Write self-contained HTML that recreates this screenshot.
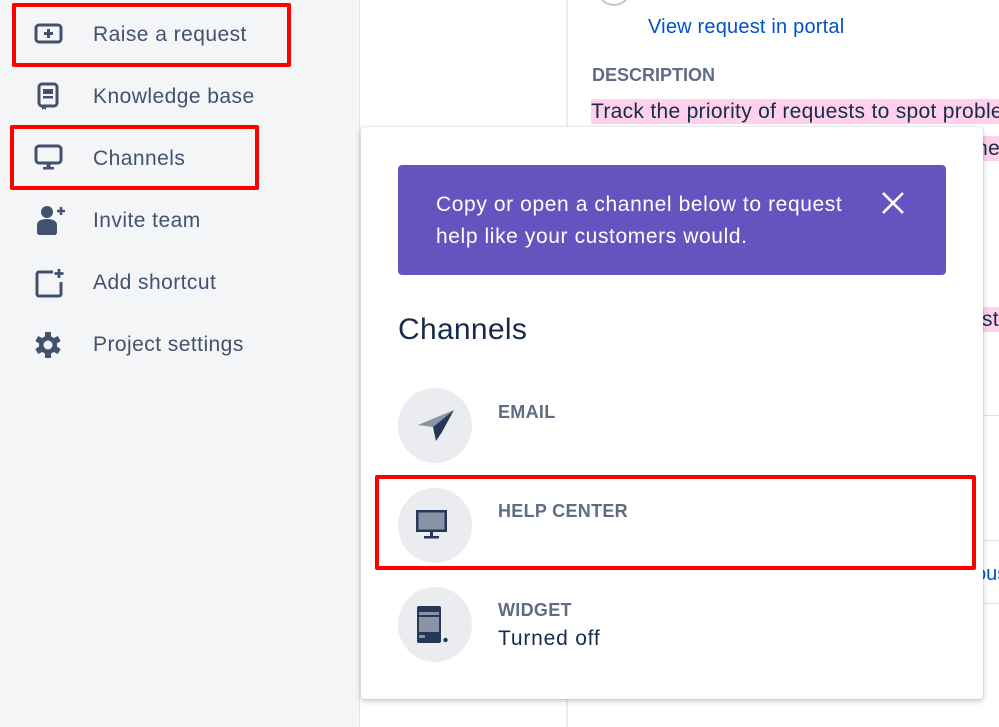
<!DOCTYPE html>
<html><head><meta charset="utf-8"><style>
*{margin:0;padding:0;box-sizing:border-box}
body{width:999px;height:727px;overflow:hidden;background:#fff;font-family:"Liberation Sans",sans-serif;position:relative}
.abs{position:absolute}
.side{left:0;top:0;width:360px;height:727px;background:#f4f5f7;border-right:1px solid #e4e6ea}
.nav{position:absolute;left:93px;font-size:21px;letter-spacing:.45px;color:#42526e;line-height:24px}
.ic{position:absolute;left:34px}
.red{position:absolute;border:4px solid #ff0000;border-radius:2px}
.pink{background:#ffd1ea;color:#172b4d;font-size:21px;letter-spacing:.3px;line-height:25px}
.hl{position:absolute;height:1px;background:#dfe1e6}
.pop{left:361px;top:127px;width:622px;height:572px;background:#fff;border-radius:4px;box-shadow:0 2px 6px rgba(9,30,66,.25),0 0 1px rgba(9,30,66,.3)}
.circ{position:absolute;left:398px;width:74px;height:75px;border-radius:50%;background:#ebecf0}
.lab{position:absolute;left:498px;font-size:18px;font-weight:bold;color:#5e6c84;letter-spacing:.3px}
</style></head><body>
<div class="abs side"></div>

<svg class="ic" style="top:22px" width="30" height="24" viewBox="0 0 30 24"><rect x="2" y="3" width="25" height="17" rx="3" fill="none" stroke="#42526e" stroke-width="3"/><path d="M14.5 7v9M10 11.5h9" stroke="#42526e" stroke-width="3"/></svg>
<svg class="ic" style="top:82px" width="30" height="30" viewBox="0 0 30 30"><rect x="5" y="2" width="18" height="22" rx="3" fill="none" stroke="#42526e" stroke-width="3"/><rect x="9" y="7" width="10" height="5" fill="#42526e"/><rect x="9" y="14" width="10" height="2.5" fill="#42526e"/><path d="M8 24v4l2-1.5 2 1.5v-4" fill="#42526e"/></svg>
<svg class="ic" style="top:144px" width="30" height="30" viewBox="0 0 30 30"><rect x="2" y="2" width="25" height="17" rx="3" fill="none" stroke="#42526e" stroke-width="3"/><rect x="12.5" y="19" width="4" height="5" fill="#42526e"/><rect x="9" y="23" width="11" height="2.5" fill="#42526e"/></svg>
<svg class="ic" style="top:204px" width="34" height="32" viewBox="0 0 34 32"><circle cx="13" cy="8" r="6" fill="#42526e"/><path d="M3 21c0-4 4-6 10-6s10 2 10 6v7c0 2-1 3-3 3H6c-2 0-3-1-3-3z" fill="#42526e"/><path d="M27 3v8M23 7h8" stroke="#42526e" stroke-width="2.5"/></svg>
<svg class="ic" style="top:268px" width="32" height="32" viewBox="0 0 32 32"><path d="M19 4H5a2 2 0 0 0-2 2v20a2 2 0 0 0 2 2h20a2 2 0 0 0 2-2V14" fill="none" stroke="#42526e" stroke-width="3"/><path d="M25 1v9M20.5 5.5h9" stroke="#42526e" stroke-width="2.8"/></svg>
<svg class="ic" style="top:330px" width="30" height="30" viewBox="0 0 30 30"><g fill="#42526e"><circle cx="14" cy="15" r="9"/><rect x="11" y="2" width="6" height="26" rx="1"/><rect x="11" y="2" width="6" height="26" rx="1" transform="rotate(60 14 15)"/><rect x="11" y="2" width="6" height="26" rx="1" transform="rotate(120 14 15)"/></g><circle cx="14" cy="15" r="4.5" fill="#f4f5f7"/></svg>

<div class="nav" style="top:23px">Raise a request</div>
<div class="nav" style="top:85px">Knowledge base</div>
<div class="nav" style="top:147px">Channels</div>
<div class="nav" style="top:209px">Invite team</div>
<div class="nav" style="top:271px">Add shortcut</div>
<div class="nav" style="top:333px">Project settings</div>
<div class="red" style="left:12px;top:3px;width:279px;height:64px"></div>
<div class="red" style="left:10px;top:125px;width:249px;height:65px"></div>

<div class="abs" style="left:566px;top:0;width:2px;height:727px;background:#ebecf0"></div>
<div class="abs" style="left:597px;top:-28px;width:34px;height:34px;border-radius:50%;border:2px solid #c1c7d0"></div>
<div class="abs" style="left:648px;top:16px;font-size:20px;letter-spacing:.2px;color:#0052cc">View request in portal</div>
<div class="abs" style="left:592px;top:65px;font-size:18px;font-weight:bold;color:#5e6c84">DESCRIPTION</div>
<div class="abs pink" style="left:591px;top:99px;width:420px;white-space:nowrap;overflow:hidden">Track the priority of requests to spot problems</div>
<div class="abs pink" style="left:970px;top:136px;width:40px">the</div>
<div class="abs pink" style="left:970px;top:307px;width:40px">ost</div>
<div class="hl" style="left:983px;top:415px;width:16px"></div>
<div class="hl" style="left:983px;top:540px;width:16px"></div>
<div class="hl" style="left:983px;top:603px;width:16px"></div>
<div class="abs" style="left:975px;top:563px;font-size:20px;color:#0052cc">ous</div>

<div class="abs pop"></div>
<div class="abs" style="left:398px;top:165px;width:548px;height:110px;background:#6554c0;border-radius:4px"></div>
<div class="abs" style="left:436px;top:189px;font-size:21px;letter-spacing:.6px;line-height:32px;color:#fff">Copy or open a channel below to request<br>help like your customers would.</div>
<svg class="abs" style="left:880px;top:190px" width="26" height="26" viewBox="0 0 26 26"><path d="M3 3l20 20M23 3L3 23" stroke="#fff" stroke-width="2.6"/></svg>
<div class="abs" style="left:398px;top:313px;font-size:30px;letter-spacing:.3px;color:#172b4d">Channels</div>

<div class="circ" style="top:388px"></div>
<svg class="abs" style="left:413px;top:405px" width="44" height="40" viewBox="0 0 44 40"><path d="M5 20L41 5 20 22z" fill="#8993a4"/><path d="M41 5L20 22l3 14 6-9z" fill="#253858"/></svg>
<div class="lab" style="top:402px">EMAIL</div>

<div class="circ" style="top:488px"></div>
<svg class="abs" style="left:410px;top:507px" width="44" height="40" viewBox="0 0 44 40"><rect x="6" y="3" width="31" height="22" fill="#253858"/><rect x="8.5" y="5.5" width="26" height="17" fill="#8993a4"/><rect x="20" y="25" width="3" height="4" fill="#253858"/><rect x="14" y="29" width="15" height="2.5" fill="#253858"/></svg>
<div class="lab" style="top:501px">HELP CENTER</div>

<div class="circ" style="top:587px"></div>
<svg class="abs" style="left:410px;top:603px" width="44" height="44" viewBox="0 0 44 44"><rect x="7" y="3" width="24" height="37" rx="2" fill="#253858"/><rect x="9" y="9" width="20" height="3" fill="#8993a4"/><rect x="9" y="14" width="20" height="15" fill="#8993a4"/><rect x="9" y="32" width="6" height="3" fill="#8993a4"/><circle cx="35.5" cy="37" r="2.2" fill="#253858"/></svg>
<div class="lab" style="top:600px">WIDGET</div>
<div class="abs" style="left:498px;top:627px;font-size:21px;letter-spacing:.8px;color:#172b4d">Turned off</div>

<div class="red" style="left:375px;top:475px;width:601px;height:95px"></div>
</body></html>
